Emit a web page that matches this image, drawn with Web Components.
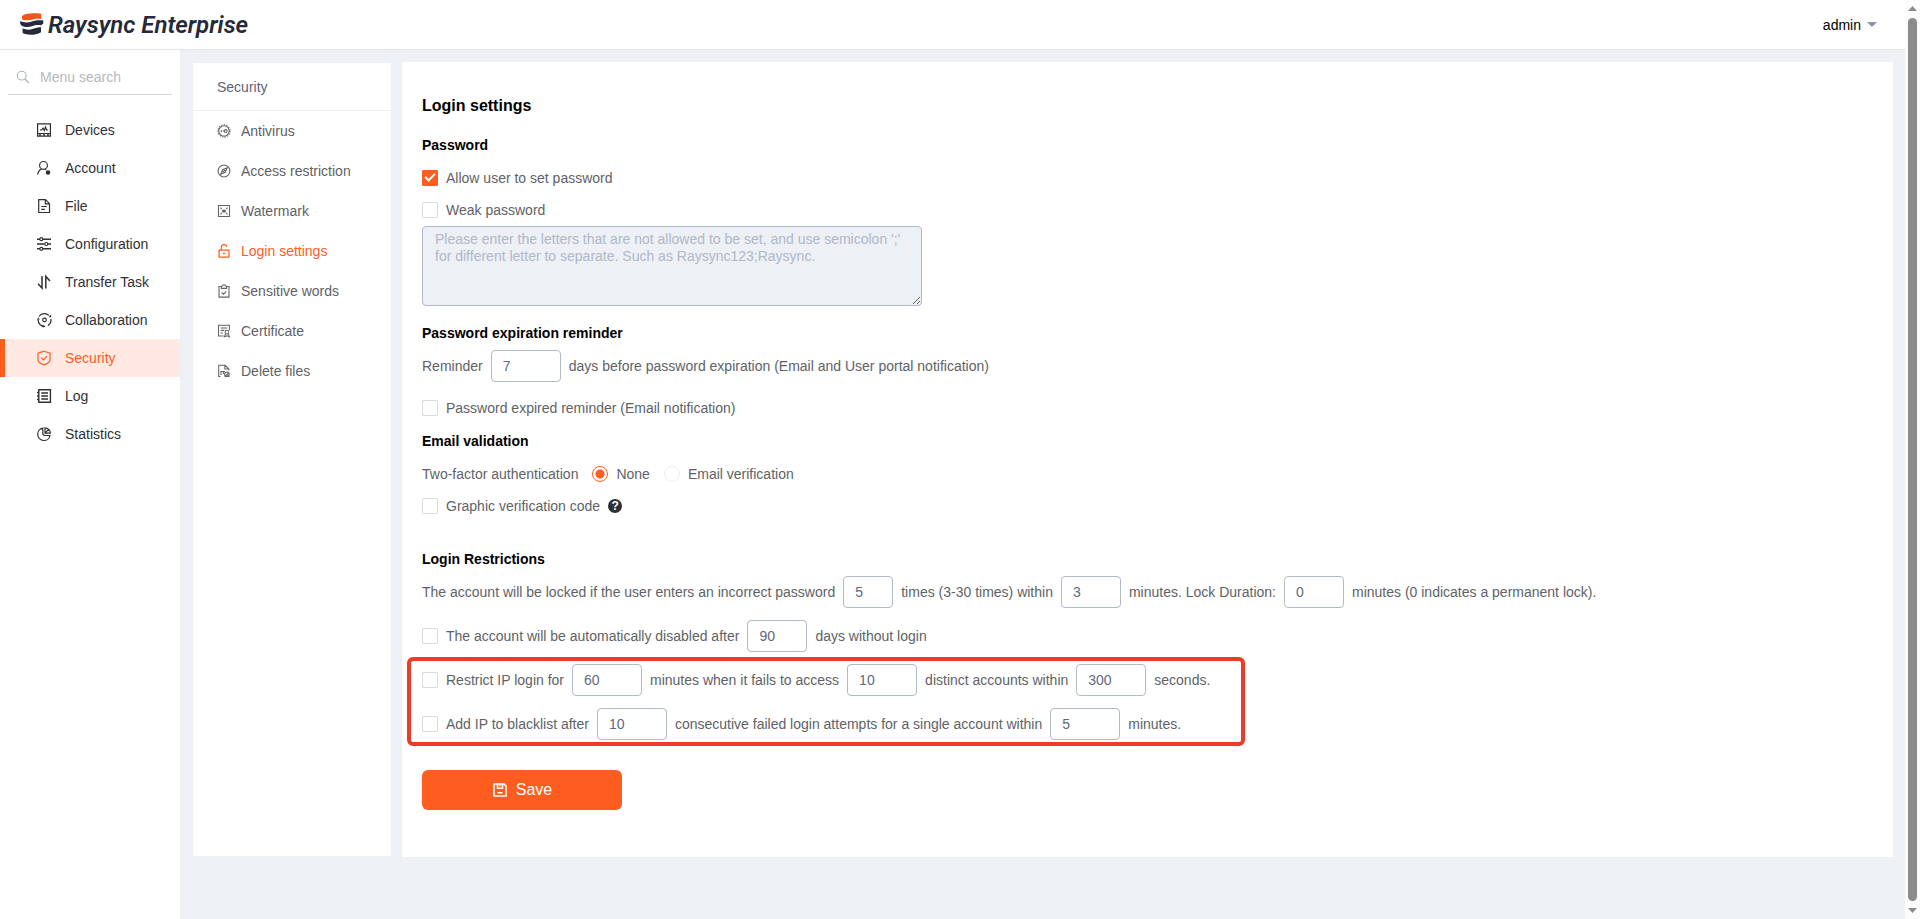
<!DOCTYPE html>
<html lang="en">
<head>
<meta charset="utf-8">
<title>Raysync Enterprise</title>
<style>
    html, body {
        height: 100%;
        margin: 0;
    }

    body {
        font: 14px/20px "Liberation Sans", Arial, sans-serif;
        color: #606266;
        background: #edf0f5;
        overflow: hidden;
    }
</style>
</head>
<body>

<rs-app>
    <rs-header slot="header" user="admin">Raysync Enterprise</rs-header>

    <rs-sidebar slot="sidebar">
        <rs-menu-item icon="devices">Devices</rs-menu-item>
        <rs-menu-item icon="account">Account</rs-menu-item>
        <rs-menu-item icon="file">File</rs-menu-item>
        <rs-menu-item icon="configuration">Configuration</rs-menu-item>
        <rs-menu-item icon="transfer">Transfer Task</rs-menu-item>
        <rs-menu-item icon="collaboration">Collaboration</rs-menu-item>
        <rs-menu-item icon="security" active>Security</rs-menu-item>
        <rs-menu-item icon="log">Log</rs-menu-item>
        <rs-menu-item icon="statistics">Statistics</rs-menu-item>
    </rs-sidebar>

    <rs-submenu heading="Security">
        <rs-submenu-item icon="antivirus">Antivirus</rs-submenu-item>
        <rs-submenu-item icon="compass">Access restriction</rs-submenu-item>
        <rs-submenu-item icon="watermark">Watermark</rs-submenu-item>
        <rs-submenu-item icon="lock" active>Login settings</rs-submenu-item>
        <rs-submenu-item icon="clipboard">Sensitive words</rs-submenu-item>
        <rs-submenu-item icon="certificate">Certificate</rs-submenu-item>
        <rs-submenu-item icon="delete">Delete files</rs-submenu-item>
    </rs-submenu>

    <rs-login-settings></rs-login-settings>
</rs-app>

<script>
(() => {

    const ICONS = {
        search: `<circle cx="6.5" cy="6.5" r="5"/><path d="M10 10l5 5" stroke-width="1.5"/>`,
        devices: `<path d="M1.6 1.8h12.8v12.4H1.6zM1.6 11.5h12.8M4 8h1.5L7 6l1.3 2.5L9.500 5l1 3H12"/><path d="M3 13h2M7 13h2M11 13h2" stroke-width="1.5"/>`,
        account: `<circle cx="7.5" cy="5.4" r="3.9"/><path d="M1.7 14.6c.2-2.7 1.6-4.5 3.7-5.5M9.2 9l1 .7"/><circle cx="12" cy="12.5" r="1.7" fill="currentColor"/>`,
        file: `<path d="M2.7 1.7h6.8l4 4v8.800H2.700zM9.3 1.9v4h4M5.3 8.5h5.4M5.3 11.3h3.6"/>`,
        configuration: `<path d="M1 3.2h3M7 3.2h8M1 8h7M12 8h3M1 12.8h3M7 12.8h8" stroke-width="1.5"/><circle cx="5.3" cy="3.2" r="1.5"/><circle cx="10.2" cy="8" r="1.5"/><circle cx="5.3" cy="12.8" r="1.5"/>`,
        transfer: `<path d="M6 2v12L2 9.8M9.8 14.5v-12L14 7" stroke-width="1.5"/>`,
        collaboration: `<circle cx="8.5" cy="8" r="1.8"/><path d="M3 4.500a6.400 6.400 0 0 1 9.800-1.200M14.900 6.800a6.400 6.400 0 0 1-3 6.600M9.200 14.400A6.400 6.400 0 0 1 2.100 8"/><path d="M12.3 5.3h2.9V2.6zM7.5 12.7l-2 1.8 2.3 1.3zM.9 7.8l1.3-2.4 1.7 2z" fill="currentColor" stroke="none"/>`,
        security: `<path d="M8 1.2l6 2v6.700c0 2-3 3.800-6 5-3-1.200-6-3-6-5V3.200zM5.200 7.600l2.200 2.200L11 6.200"/>`,
        log: `<path d="M2.8 1.8h11.600v12.400H2.800zM1 4.500h2.500M1 8h2.500M1 11.500h2.500M5.300 5h6.700M5.300 8h6.700M5.300 11h6.700" stroke-width="1.4"/>`,
        statistics: `<path d="M6.8 2.2a6.200 6.200 0 1 0 7.200 7.300H8.200L6.800 8z"/><path d="M9 1.800v5.400h5.400A5.500 5.500 0 0 0 9 1.800zM9 7l3.600-3.600"/>`,
        antivirus: `<circle cx="8" cy="8" r="6"/><circle cx="8" cy="8" r="7" stroke-dasharray="1.4 1.5"/><circle cx="10" cy="8" r="1.6"/><path d="M4.3 8h1.5M6.7 8h1" stroke-width="1.5"/>`,
        compass: `<circle cx="8" cy="8" r="6.8"/><path d="M11.7 4.3L9.4 9.5l-5.1 2.2 2.2-5.2zM6.6 9.4l2.8-2.8"/>`,
        watermark: `<path d="M1.7 1.7h12.6v12.6H1.7zM3.9 4.2l1.6 1.7M12.1 4.2l-1.6 1.7M3.9 11.8l1.6-1.7M12.1 11.8l-1.6-1.7"/><path d="M6 6.5h4v3.2H6z" fill="currentColor" stroke="none"/>`,
        lock: `<path d="M2.3 7h11.4v8H2.3zM5 7V4a3.1 3.1 0 0 1 6.2-.5M6.6 10.8h2.8" stroke-width="1.4"/>`,
        clipboard: `<path d="M4.8 2.8H2.3V15h11.4V2.8h-2.5M5 5V3.3l1.8-2.1h2.4L11 3.3V5zM5.3 9.5l2.1 2.1 3.3-3.3"/>`,
        certificate: `<path d="M7.5 13.7H1.8V1.5h12.4V7M4.3 4.5h7.4M4.3 7.3h4M4.3 10.3h2.5"/><circle cx="11.3" cy="9.3" r="2.1"/><path d="M9.8 11.2l-1.3 3.5 2.8-1.2 2.8 1.2-1.3-3.5"/>`,
        delete: `<path d="M4 14.2H2V1.5h7.2l4.3 4v2M9 1.7v4h4.3M4 8.5h5M4.5 8.5v4M7.3 8.5v3"/><circle cx="11.3" cy="11.7" r="2.6"/><path d="M8.8 14.5l5-5M11.3 11.7l3 3"/>`,
        save: `<path d="M2 2h10l2 2v10H2zM5.5 2v4.2h5V2M8 2v2M5.5 10.8h5" stroke-width="1.6"/>`
    }

    class RsElement extends HTMLElement {

        constructor(){
            super()
            this.root = this.attachShadow({mode: 'open'})
        }

        render(html){
            let template = document.createElement("template")
            template.innerHTML = html
            this.root.appendChild(template.content.cloneNode(true))
        }

    }

    /**
     * @component rs-icon
     *
     * Line icon drawn with the current text color, on a 16 unit grid
     */
    customElements.define("rs-icon", class extends RsElement {
        connectedCallback(){
            this.render(`
                <style>
                    :host {
                        display: inline-flex;
                        flex: none;
                        width: 16px;
                        height: 16px;
                    }

                    svg {
                        width: 100%;
                        height: 100%;
                    }
                </style>
                <svg viewBox="0 0 16 16" fill="none" stroke="currentColor" stroke-width="1.2" aria-hidden="true">${ICONS[this.getAttribute("name")]}</svg>
            `)
        }
    })

    /**
     * @component rs-scrollbar
     */
    customElements.define("rs-scrollbar", class extends RsElement {
        connectedCallback(){
            this.render(`
                <style>
                    :host {
                        display: flex;
                        flex-direction: column;
                        align-items: center;
                        box-sizing: border-box;
                        width: 15px;
                        padding: 6px 0;
                        gap: 7px;
                        background: #fcfcfc;
                    }

                    .arrow {
                        width: 9px;
                        height: 5px;
                        background: #8b8b8b;
                    }

                    .up {
                        clip-path: polygon(50% 0, 100% 100%, 0 100%);
                    }

                    .down {
                        clip-path: polygon(0 0, 100% 0, 50% 100%);
                    }

                    .thumb {
                        flex: 1;
                        width: 9px;
                        border-radius: 5px;
                        background: #8b8b8b;
                    }
                </style>
                <div class="arrow up"></div>
                <div class="thumb"></div>
                <div class="arrow down"></div>
            `)
        }
    })

    /**
     * @component rs-app
     *
     * Page frame: header, main menu and content area
     */
    customElements.define("rs-app", class extends RsElement {
        connectedCallback(){
            this.render(`
                <style>
                    :host {
                        display: flex;
                        height: 100%;
                    }

                    .page {
                        flex: 1;
                        min-width: 0;
                        display: flex;
                        flex-direction: column;
                    }

                    .body {
                        flex: 1;
                        display: flex;
                        min-height: 0;
                    }

                    main {
                        flex: 1;
                        min-width: 0;
                        padding: 12px 12px 0 13px;
                    }

                    .panels {
                        display: flex;
                        gap: 11px;
                    }
                </style>
                <div class="page">
                    <slot name="header"></slot>
                    <div class="body">
                        <slot name="sidebar"></slot>
                        <main>
                            <div class="panels"><slot></slot></div>
                        </main>
                    </div>
                </div>
                <rs-scrollbar></rs-scrollbar>
            `)
        }
    })

    /**
     * @component rs-header
     */
    customElements.define("rs-header", class extends RsElement {
        connectedCallback(){
            this.render(`
                <style>
                    :host {
                        display: flex;
                        align-items: center;
                        justify-content: space-between;
                        height: 49px;
                        padding: 0 28px 0 20px;
                        background: white;
                        border-bottom: 1px solid #e1e4ea;
                    }

                    .brand {
                        display: flex;
                        align-items: center;
                        gap: 4px;
                        color: #242a3b;
                        font: italic 600 24px/28px Roboto, sans-serif;
                        text-decoration: none;
                    }

                    .brand svg {
                        width: 24px;
                        height: 24px;
                    }

                    button {
                        display: flex;
                        align-items: center;
                        gap: 6px;
                        padding: 0;
                        border: none;
                        background: transparent;
                        color: black;
                        font: inherit;
                        cursor: pointer;
                    }

                    .caret {
                        border: 5px solid transparent;
                        border-top-color: #8b92a8;
                        border-bottom: none;
                    }
                </style>
                <a class="brand" href="#">
                    <svg viewBox="0 0 24 24" aria-hidden="true">
                        <path fill="#f0561d" d="M2 3C4 1.300 7 .5 10 .5c4-.3 8-.2 11.300.3v5.300c-4-1-7.500-.2-11 .9-3 .6-6 .3-8.300-.5z"/>
                        <path fill="#242a3b" d="M0 8.300c4 1.400 8 1.500 12 .2 4-1.500 7.500-1.600 11.300-.9v3c-.8.900-1.500 1.300-2.500 1.700-3.300-.6-6 0-8.800 1-4 1.200-7.500.9-10.300-.6C.5 11.800 0 10.500 0 8.300z"/>
                        <path fill="#242a3b" d="M2.500 15.600c4 1.500 7.500 1.300 10.500.2 3-1 5.500-1.600 8-1.500v5c-3 2.300-7 2.500-10 2.500-3.500 0-6.500-.4-8.300-1.700z"/>
                    </svg>
                    <slot></slot>
                </a>
                <button type="button">${this.getAttribute("user")}<span class="caret"></span></button>
            `)
        }
    })

    /**
     * @component rs-sidebar
     *
     * Main menu with its search box
     */
    customElements.define("rs-sidebar", class extends RsElement {
        connectedCallback(){
            this.render(`
                <style>
                    :host {
                        display: block;
                        width: 180px;
                        background: white;
                    }

                    .search {
                        display: flex;
                        align-items: center;
                        gap: 10px;
                        height: 34px;
                        margin: 10px 8px 16px;
                        padding-left: 8px;
                        border-bottom: 1px solid #d3d5da;
                        color: #a8b0c0;
                    }

                    .search rs-icon {
                        width: 14px;
                        height: 14px;
                    }

                    input {
                        flex: 1;
                        min-width: 0;
                        padding: 0;
                        border: none;
                        outline: none;
                        background: transparent;
                        font: inherit;
                    }

                    input::placeholder {
                        color: #b6b8bd;
                    }
                </style>
                <label class="search">
                    <rs-icon name="search"></rs-icon>
                    <input type="text" aria-label="Menu search" placeholder="Menu search">
                </label>
                <nav><slot></slot></nav>
            `)
        }
    })

    /**
     * @component rs-menu-item
     */
    customElements.define("rs-menu-item", class extends RsElement {
        connectedCallback(){
            this.render(`
                <style>
                    :host {
                        display: block;
                        color: #303133;
                    }

                    :host([active]) {
                        color: #ff5c1f;
                        background: #ffe9e2;
                    }

                    a {
                        display: flex;
                        align-items: center;
                        gap: 13px;
                        height: 38px;
                        padding-left: 31px;
                        border-left: 5px solid transparent;
                        color: inherit;
                        text-decoration: none;
                    }

                    :host([active]) a {
                        border-left-color: #ff5c1f;
                    }
                </style>
                <a href="#"><rs-icon name="${this.getAttribute("icon")}"></rs-icon><slot></slot></a>
            `)
        }
    })

    /**
     * @component rs-submenu
     */
    customElements.define("rs-submenu", class extends RsElement {
        connectedCallback(){
            this.render(`
                <style>
                    :host {
                        display: block;
                        flex: none;
                        width: 198px;
                        margin: 1px 0;
                        background: white;
                    }

                    header {
                        box-sizing: border-box;
                        height: 48px;
                        line-height: 48px;
                        padding-left: 24px;
                        border-bottom: 1px solid #ebedf3;
                        color: #606478;
                    }
                </style>
                <header>${this.getAttribute("heading")}</header>
                <nav><slot></slot></nav>
            `)
        }
    })

    /**
     * @component rs-submenu-item
     */
    customElements.define("rs-submenu-item", class extends RsElement {
        connectedCallback(){
            this.render(`
                <style>
                    :host {
                        display: block;
                    }

                    a {
                        display: flex;
                        align-items: center;
                        gap: 10px;
                        height: 40px;
                        padding-left: 24px;
                        color: #606266;
                        text-decoration: none;
                    }

                    :host([active]) a {
                        color: #ff5c1f;
                    }

                    rs-icon {
                        width: 14px;
                        height: 14px;
                    }
                </style>
                <a href="#"><rs-icon name="${this.getAttribute("icon")}"></rs-icon><slot></slot></a>
            `)
        }
    })

    /**
     * @component rs-check
     *
     * Tick box followed by its label
     */
    customElements.define("rs-check", class extends RsElement {
        connectedCallback(){
            this.render(`
                <style>
                    :host {
                        display: inline-flex;
                        align-items: center;
                        gap: 8px;
                    }

                    input {
                        appearance: none;
                        flex: none;
                        display: grid;
                        place-items: center;
                        width: 16px;
                        height: 16px;
                        margin: 0;
                        border: 1px solid #d9dbdf;
                        border-radius: 1px;
                        background: white;
                    }

                    input:checked {
                        border-color: #ff5c1f;
                        background: #ff5c1f;
                    }

                    input:checked::after {
                        content: "";
                        width: 8px;
                        height: 4px;
                        margin-top: -4px;
                        border: 2px solid white;
                        border-top: none;
                        border-right: none;
                        transform: rotate(-45deg);
                    }
                </style>
                <input type="checkbox" id="check" ${this.hasAttribute("checked") ? "checked" : ""}>
                <label for="check"><slot></slot></label>
            `)
        }
    })

    /**
     * @component rs-field
     *
     * Short number box, preceded by its label when there is one
     */
    customElements.define("rs-field", class extends RsElement {
        connectedCallback(){
            let named = this.textContent.trim() !== ""
            this.render(`
                <style>
                    :host {
                        display: inline-flex;
                        align-items: center;
                        gap: 8px;
                        --width: 70px;
                    }

                    :host([size="small"]) {
                        --width: 50px;
                    }

                    :host([size="medium"]) {
                        --width: 60px;
                    }

                    input {
                        box-sizing: border-box;
                        width: var(--width);
                        height: 32px;
                        padding: 0 11px;
                        border: 1px solid #b0b8c9;
                        border-radius: 4px;
                        background: white;
                        color: #606780;
                        font: inherit;
                    }
                </style>
                ${named ? `<label for="field"><slot></slot></label>` : ""}
                <input type="text" inputmode="numeric" id="field" value="${this.getAttribute("value")}"
                    ${named ? "" : `aria-label="${this.getAttribute("label")}"`}>
            `)
        }
    })

    /**
     * @component rs-section
     *
     * Group of form rows under a bold heading
     */
    customElements.define("rs-section", class extends RsElement {
        connectedCallback(){
            this.render(`
                <style>
                    :host {
                        display: block;
                    }

                    h3 {
                        margin: 0;
                        font-size: 14px;
                        line-height: 34px;
                        color: black;
                    }
                </style>
                <h3>${this.getAttribute("heading")}</h3>
                <slot></slot>
            `)
        }
    })

    /**
     * @component rs-login-settings
     */
    customElements.define("rs-login-settings", class extends RsElement {
        connectedCallback(){
            this.render(`
                <style>
                    :host {
                        display: block;
                        flex: 1;
                        min-width: 0;
                        background: white;
                    }

                    form {
                        padding: 22px 20px 47px;
                    }

                    h2 {
                        margin: 0;
                        font-size: 16px;
                        line-height: 44px;
                        color: black;
                    }

                    .row {
                        display: flex;
                        align-items: center;
                        gap: 8px;
                        min-height: 32px;
                    }

                    .reminder {
                        margin-bottom: 10px;
                    }

                    textarea {
                        display: block;
                        box-sizing: border-box;
                        width: 500px;
                        max-width: 100%;
                        height: 80px;
                        margin-bottom: 10px;
                        padding: 4px 12px;
                        border: 1px solid #b0b8c9;
                        border-radius: 4px;
                        background: #edf0f5;
                        font: inherit;
                        line-height: 17px;
                    }

                    textarea::placeholder {
                        color: #b0b8c9;
                    }

                    .factors {
                        gap: 14px;
                    }

                    .choice {
                        display: flex;
                        align-items: center;
                        gap: 8px;
                    }

                    .choice input {
                        appearance: none;
                        width: 16px;
                        height: 16px;
                        margin: 0;
                        border: 1px solid #ebedf0;
                        border-radius: 50%;
                    }

                    .choice input:checked {
                        border-color: #ff5c1f;
                        background: radial-gradient(circle, #ff5c1f 4px, white 5px);
                    }

                    .help {
                        width: 14px;
                        height: 14px;
                        border-radius: 50%;
                        background: #303133;
                        color: white;
                        font-size: 12px;
                        font-weight: bold;
                        line-height: 14px;
                        text-align: center;
                    }

                    .restrictions {
                        margin-top: 20px;
                    }

                    .stack {
                        display: grid;
                        justify-items: start;
                        gap: 12px;
                    }

                    /* outline round the two IP rules, laid over the form */
                    .rules {
                        position: relative;
                        padding-right: 35px;
                    }

                    .rules::after {
                        content: "";
                        position: absolute;
                        inset: -7px 0 -6px -15px;
                        border: 4px solid #ed3c25;
                        border-radius: 6px;
                        pointer-events: none;
                    }

                    button {
                        display: flex;
                        align-items: center;
                        justify-content: center;
                        gap: 8px;
                        width: 200px;
                        height: 40px;
                        margin-top: 30px;
                        padding: 0;
                        border: none;
                        border-radius: 6px;
                        background: #ff5c1f;
                        color: white;
                        font: inherit;
                        font-size: 16px;
                        cursor: pointer;
                    }
                </style>
                <form>
                    <h2>Login settings</h2>

                    <rs-section heading="Password">
                        <div class="row"><rs-check checked>Allow user to set password</rs-check></div>
                        <div class="row"><rs-check>Weak password</rs-check></div>
                        <textarea disabled aria-label="Weak password" placeholder="Please enter the letters that are not allowed to be set, and use semicolon ';' for different letter to separate. Such as Raysync123;Raysync."></textarea>
                    </rs-section>

                    <rs-section heading="Password expiration reminder">
                        <div class="row reminder">
                            <rs-field value="7">Reminder</rs-field>
                            <span>days before password expiration (Email and User portal notification)</span>
                        </div>
                        <div class="row"><rs-check>Password expired reminder (Email notification)</rs-check></div>
                    </rs-section>

                    <rs-section heading="Email validation">
                        <div class="row factors">
                            <span>Two-factor authentication</span>
                            <label class="choice"><input type="radio" name="factor" checked>None</label>
                            <label class="choice"><input type="radio" name="factor">Email verification</label>
                        </div>
                        <div class="row">
                            <rs-check>Graphic verification code</rs-check>
                            <span class="help">?</span>
                        </div>
                    </rs-section>

                    <rs-section class="restrictions" heading="Login Restrictions">
                        <div class="stack">
                            <div class="row">
                                <rs-field size="small" value="5">The account will be locked if the user enters an incorrect password</rs-field>
                                <rs-field size="medium" value="3">times (3-30 times) within</rs-field>
                                <rs-field size="medium" value="0">minutes. Lock Duration:</rs-field>
                                <span>minutes (0 indicates a permanent lock).</span>
                            </div>
                            <div class="row">
                                <rs-check>The account will be automatically disabled after</rs-check>
                                <rs-field size="medium" value="90" label="Days without login"></rs-field>
                                <span>days without login</span>
                            </div>
                            <div class="stack rules">
                                <div class="row">
                                    <rs-check>Restrict IP login for</rs-check>
                                    <rs-field value="60" label="Restriction in minutes"></rs-field>
                                    <rs-field value="10">minutes when it fails to access</rs-field>
                                    <rs-field value="300">distinct accounts within</rs-field>
                                    <span>seconds.</span>
                                </div>
                                <div class="row">
                                    <rs-check>Add IP to blacklist after</rs-check>
                                    <rs-field value="10" label="Failed login attempts"></rs-field>
                                    <rs-field value="5">consecutive failed login attempts for a single account within</rs-field>
                                    <span>minutes.</span>
                                </div>
                            </div>
                        </div>
                    </rs-section>

                    <button type="button"><rs-icon name="save"></rs-icon>Save</button>
                </form>
            `)
        }
    })

})()
</script>
</body>
</html>
